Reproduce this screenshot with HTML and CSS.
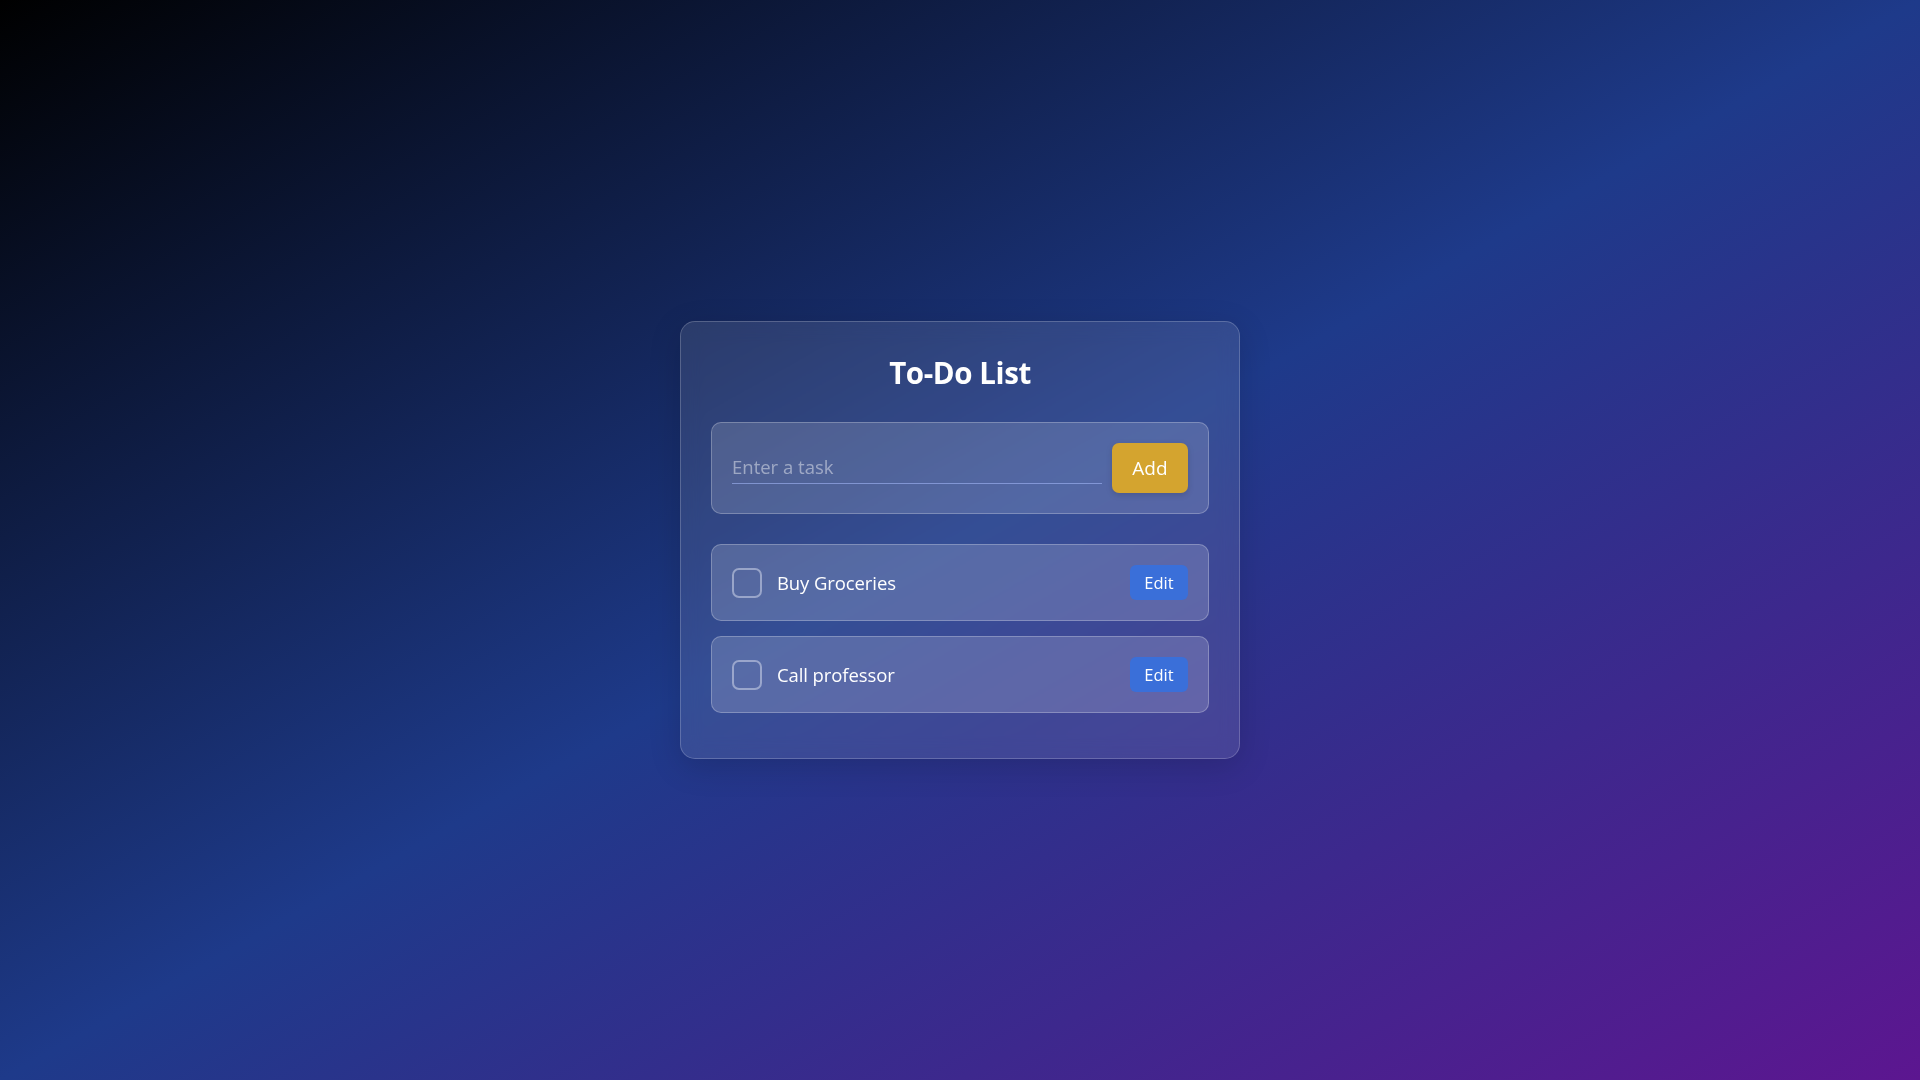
FILE: index.html
```html
<!DOCTYPE html>
<html lang="en">
<head>
<meta charset="utf-8">
<title>To-Do List</title>
<link rel="stylesheet" href="styles.css">
</head>
<body>
<main class="todo-card">
  <h1 class="todo-title">To-Do List</h1>
  <div class="add-row">
    <input class="task-input" type="text" placeholder="Enter a task">
    <button class="add-btn" type="button">Add</button>
  </div>
  <ul class="task-list">
    <li class="task-item">
      <span class="check"></span>
      <span class="task-text">Buy Groceries</span>
      <button class="edit-btn" type="button">Edit</button>
    </li>
    <li class="task-item">
      <span class="check"></span>
      <span class="task-text">Call professor</span>
      <button class="edit-btn" type="button">Edit</button>
    </li>
  </ul>
</main>
</body>
</html>
```
FILE: styles.css
```css
* { box-sizing: border-box; }
html, body { height: 100%; }
body {
  margin: 0;
  font-family: "Open Sans", "Noto Sans", sans-serif;
  background: linear-gradient(to bottom right, #000000 0%, #1e3a8a 50%, #5c1690 100%);
  display: flex;
  align-items: center;
  justify-content: center;
  color: #fff;
}
.todo-card {
  width: 560px;
  padding: 30px 30px 30px;
  background: rgba(255, 255, 255, 0.1);
  border: 1px solid rgba(255, 255, 255, 0.2);
  border-radius: 15px;
  backdrop-filter: blur(10px);
  box-shadow: 0 8px 32px rgba(0, 0, 0, 0.15);
}
.todo-title {
  margin: 0 0 29px;
  text-align: center;
  font-size: 29.5px;
  line-height: 41px;
  font-weight: 700;
  letter-spacing: -0.4px;
}
.add-row {
  display: flex;
  align-items: center;
  gap: 10px;
  padding: 20px;
  background: rgba(255, 255, 255, 0.15);
  border: 1px solid rgba(255, 255, 255, 0.25);
  border-radius: 10px;
  margin-bottom: 30px;
}
.task-input {
  flex: 1;
  min-width: 0;
  background: transparent;
  border: none;
  border-bottom: 1px solid rgba(170, 190, 255, 0.55);
  padding: 3px 0 4px;
  font-family: inherit;
  font-size: 18.5px;
  color: #fff;
  outline: none;
  margin-bottom: 1px;
}
.task-input::placeholder { color: rgba(255, 255, 255, 0.45); }
.add-btn {
  width: 76px;
  height: 50px;
  border: none;
  border-radius: 7px;
  background: #d4a42f;
  color: #fff;
  font-family: inherit;
  font-size: 19px;
  box-shadow: 0 2px 6px rgba(0, 0, 0, 0.15);
}
.task-list {
  list-style: none;
  margin: 0;
  padding: 0;
}
.task-item {
  display: flex;
  align-items: center;
  padding: 20px;
  margin-bottom: 15px;
  background: rgba(255, 255, 255, 0.17);
  border: 1px solid rgba(255, 255, 255, 0.25);
  border-radius: 10px;
}
.check {
  width: 30px;
  height: 30px;
  border: 2px solid rgba(210, 215, 235, 0.55);
  border-radius: 7px;
  flex: none;
}
.task-text {
  flex: 1;
  margin-left: 15px;
  font-size: 18.5px;
  letter-spacing: -0.1px;
}
.edit-btn {
  width: 58px;
  height: 35px;
  border: none;
  border-radius: 6px;
  background: #3a6fd9;
  color: #fff;
  font-family: inherit;
  font-size: 16.5px;
}
```
